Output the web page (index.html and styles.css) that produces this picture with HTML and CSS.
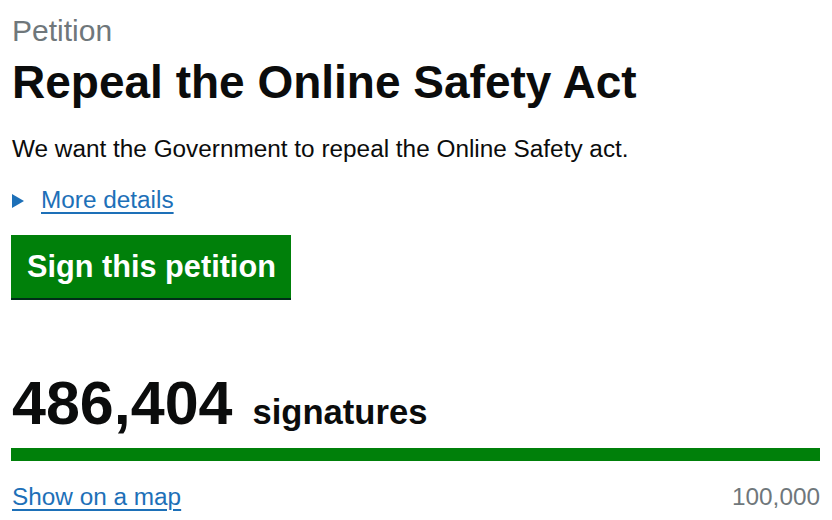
FILE: index.html
```html
<!DOCTYPE html>
<html lang="en">
<head>
<meta charset="utf-8">
<title>Repeal the Online Safety Act - Petitions</title>
<link rel="stylesheet" href="styles.css">
</head>
<body>
<main class="page">
  <span class="caption">Petition</span>
  <h1 class="title">Repeal the Online Safety Act</h1>
  <p class="summary">We want the Government to repeal the Online Safety act.</p>
  <details class="details">
    <summary class="details-summary"><span class="arrow"></span><span class="details-text">More details</span></summary>
  </details>
  <a class="button" href="#">Sign this petition</a>
  <div class="count"><span class="count-number">486,404</span><span class="count-label">signatures</span></div>
  <div class="progress"><div class="progress-fill" style="width:100%"></div></div>
  <div class="footer-row">
    <a class="link" href="#">Show on a map</a>
    <span class="target">100,000</span>
  </div>
</main>
</body>
</html>
```

FILE: styles.css
```css
html, body {
  margin: 0;
  padding: 0;
  background: #ffffff;
}
body {
  font-family: "Liberation Sans", Arial, sans-serif;
  color: #0b0c0c;
}
.page {
  padding: 13px 12px 0 11px;
  display: flex;
  flex-direction: column;
  align-items: flex-start;
}
.caption {
  display: block;
  font-size: 30px;
  line-height: 36px;
  color: #6f777b;
  padding-left: 1px;
}
.title {
  margin: 8px 0 0 1px;
  font-size: 46px;
  line-height: 50px;
  font-weight: 700;
}
.summary {
  margin: 27px 0 0 1px;
  font-size: 24.35px;
  line-height: 30px;
}
.details {
  margin: 21px 0 0 1px;
}
.details-summary {
  list-style: none;
  display: flex;
  align-items: center;
  gap: 17px;
  font-size: 24.35px;
  line-height: 30px;
  color: #1d70b8;
  cursor: pointer;
}
.details-summary::-webkit-details-marker {
  display: none;
}
.arrow {
  width: 0;
  height: 0;
  border-left: 12px solid #1d70b8;
  border-top: 7px solid transparent;
  border-bottom: 7px solid transparent;
  margin-top: 1px;
}
.details-text,
.link {
  color: #1d70b8;
  text-decoration: underline;
  text-decoration-thickness: 1.5px;
  text-underline-offset: 4px;
}
.button {
  margin-top: 20px;
  display: block;
  background: #00800a;
  color: #ffffff;
  font-size: 30.7px;
  line-height: 36px;
  font-weight: 700;
  padding: 14px 15px 13px 16px;
  text-decoration: none;
  box-shadow: 0 2px 0 #002d18;
}
.count {
  margin-top: 70px;
  padding-left: 1px;
  display: flex;
  align-items: baseline;
  height: 70px;
  font-weight: 700;
}
.count-number {
  font-size: 61px;
  line-height: 70px;
}
.count-label {
  font-size: 34.6px;
  line-height: 1;
  margin-left: 20px;
}
.progress {
  margin-top: 10px;
  align-self: stretch;
  height: 13px;
  background: #dee0e2;
}
.progress-fill {
  height: 100%;
  background: #00800a;
}
.footer-row {
  margin-top: 21px;
  align-self: stretch;
  display: flex;
  justify-content: space-between;
  font-size: 24.35px;
  line-height: 30px;
  padding-left: 1px;
}
.target {
  color: #6f777b;
}
```
